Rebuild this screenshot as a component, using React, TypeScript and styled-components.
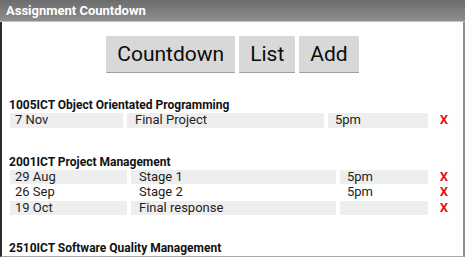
import styled, { createGlobalStyle } from "styled-components";

const GlobalStyle = createGlobalStyle`
  html, body {
    margin: 0;
    padding: 0;
    background: #ffffff;
  }
  body {
    font-family: Roboto, "Liberation Sans", sans-serif;
  }
`;

const Screen = styled.div`
  width: 465px;
  height: 257px;
  display: flex;
  flex-direction: column;
  overflow: hidden;
  background: #ffffff;
`;

const TitleBar = styled.div`
  height: 21px;
  flex-shrink: 0;
  display: flex;
  align-items: center;
  padding-left: 6px;
  background: linear-gradient(#6c6c6c, #8e8e8e);
  border-bottom: 1px solid #c4c4c4;
  color: #ffffff;
  font-size: 13px;
  font-weight: 700;
`;

const Body = styled.div`
  flex: 1;
  display: flex;
  flex-direction: column;
  border-left: 2px solid #2e2e2e;
  border-right: 2px solid #8c8c8c;
  border-bottom: 1px solid #a8a8a8;
  padding: 14px 0 0 7px;
  overflow: hidden;
`;

const Toolbar = styled.div`
  display: flex;
  justify-content: center;
  gap: 4px;
  margin-left: -7px;
  margin-bottom: 26px;
`;

const NavButton = styled.button`
  height: 36px;
  padding: 0 11px;
  border: none;
  border-radius: 1px;
  background: #d8d8d8;
  box-shadow: 0 1px 0 #9e9e9e;
  color: #0c0c0c;
  font-family: Roboto, "Liberation Sans", sans-serif;
  font-size: 21px;
`;

const Section = styled.div<{ $space: number }>`
  display: flex;
  flex-direction: column;
  margin-bottom: ${(p) => p.$space}px;
`;

const CourseTitle = styled.div`
  height: 14px;
  line-height: 14px;
  font-size: 12px;
  font-weight: 700;
  color: #111111;
  white-space: nowrap;
`;

const Rows = styled.div<{ $cols: string }>`
  display: grid;
  grid-template-columns: ${(p) => p.$cols} 24px;
  column-gap: 4px;
  row-gap: 1px;
  margin: 1px 0 0 1px;
`;

const Cell = styled.div<{ $pad: number; $filled: boolean }>`
  height: 14.5px;
  line-height: 14.5px;
  padding-left: ${(p) => p.$pad}px;
  background: ${(p) => (p.$filled ? "#eeeeee" : "transparent")};
  color: #1e1e1e;
  font-size: 13px;
  white-space: nowrap;
`;

const Remove = styled.div`
  height: 14.5px;
  line-height: 14.5px;
  text-align: center;
  color: #e31010;
  font-size: 13px;
  font-weight: 700;
`;

interface IItem {
  date: string;
  name: string;
  time: string;
}

interface ICourse {
  code: string;
  cols: string;
  space: number;
  items: IItem[];
}

const courses: ICourse[] = [
  {
    code: "1005ICT Object Orientated Programming",
    cols: "113px 197px 100px",
    space: 27,
    items: [{ date: "7 Nov", name: "Final Project", time: "5pm" }],
  },
  {
    code: "2001ICT Project Management",
    cols: "117px 205px 88px",
    space: 25.5,
    items: [
      { date: "29 Aug", name: "Stage 1", time: "5pm" },
      { date: "26 Sep", name: "Stage 2", time: "5pm" },
      { date: "19 Oct", name: "Final response", time: "" },
    ],
  },
  {
    code: "2510ICT Software Quality Management",
    cols: "117px 205px 88px",
    space: 0,
    items: [],
  },
];

function App() {
  return (
    <>
      <GlobalStyle />
      <Screen>
        <TitleBar>Assignment Countdown</TitleBar>
        <Body>
          <Toolbar>
            <NavButton>Countdown</NavButton>
            <NavButton>List</NavButton>
            <NavButton>Add</NavButton>
          </Toolbar>
          {courses.map((course) => (
            <Section key={course.code} $space={course.space}>
              <CourseTitle>{course.code}</CourseTitle>
              <Rows $cols={course.cols}>
                {course.items.map((item, i) => {
                  const filled = i % 2 === 0;
                  return [
                    <Cell key={"d" + i} $pad={5} $filled={filled}>
                      {item.date}
                    </Cell>,
                    <Cell key={"n" + i} $pad={8} $filled={filled}>
                      {item.name}
                    </Cell>,
                    <Cell key={"t" + i} $pad={7} $filled={filled}>
                      {item.time}
                    </Cell>,
                    <Remove key={"x" + i}>X</Remove>,
                  ];
                })}
              </Rows>
            </Section>
          ))}
        </Body>
      </Screen>
    </>
  );
}

export default App;
